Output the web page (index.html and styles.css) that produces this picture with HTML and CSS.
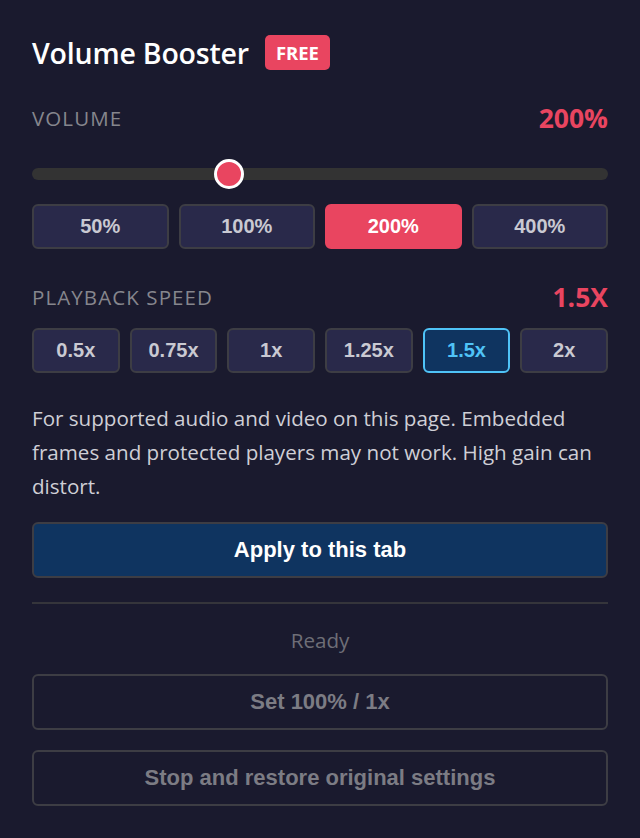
FILE: index.html
```html
<!DOCTYPE html>
<html lang="en">
<head>
<meta charset="utf-8">
<title>Volume Booster</title>
<link rel="stylesheet" href="styles.css">
</head>
<body>
<main class="popup">
  <header class="title-row">
    <h1 class="title">Volume Booster</h1>
    <span class="badge">FREE</span>
  </header>

  <section class="section">
    <div class="label-row">
      <span class="label">VOLUME</span>
      <span class="value">200%</span>
    </div>
    <div class="slider">
      <div class="track"></div>
      <div class="thumb" style="left: calc((100% - 30px) * 0.3333)"></div>
    </div>
    <div class="grid grid-4">
      <button class="chip">50%</button>
      <button class="chip">100%</button>
      <button class="chip chip-red">200%</button>
      <button class="chip">400%</button>
    </div>
  </section>

  <section class="section speed">
    <div class="label-row">
      <span class="label">PLAYBACK SPEED</span>
      <span class="value">1.5X</span>
    </div>
    <div class="grid grid-6">
      <button class="chip">0.5x</button>
      <button class="chip">0.75x</button>
      <button class="chip">1x</button>
      <button class="chip">1.25x</button>
      <button class="chip chip-blue">1.5x</button>
      <button class="chip">2x</button>
    </div>
  </section>

  <p class="note">For supported audio and video on this page. Embedded frames and protected players may not work. High gain can distort.</p>

  <button class="btn btn-primary">Apply to this tab</button>

  <hr class="divider">

  <div class="status">Ready</div>

  <button class="btn btn-ghost">Set 100% / 1x</button>
  <button class="btn btn-ghost">Stop and restore original settings</button>
</main>
</body>
</html>
```

FILE: styles.css
```css
* { box-sizing: border-box; }
html, body { margin: 0; padding: 0; }
body {
  background: #1a1a2e;
  color: #e6e6ea;
  font-family: "Open Sans", "Noto Sans", sans-serif;
  width: 640px;
  height: 838px;
  overflow: hidden;
}
.popup {
  padding: 35px 32px 0 32px;
  display: flex;
  flex-direction: column;
}
.title-row {
  display: flex;
  align-items: center;
  gap: 16px;
  height: 35px;
}
.title {
  margin: 0;
  font-size: 28.5px;
  font-weight: 600;
  color: #ffffff;
  letter-spacing: -0.2px;
}
.badge {
  background: #e94560;
  color: #fff;
  font-weight: 700;
  font-size: 18.5px;
  height: 35px;
  line-height: 35px;
  padding: 0 11px;
  border-radius: 5px;
}
.section { display: flex; flex-direction: column; }
.label-row {
  display: flex;
  justify-content: space-between;
  align-items: center;
  height: 28px;
  margin-top: 34px;
}
.label {
  font-size: 20.5px;
  font-weight: 400;
  color: #86868d;
  letter-spacing: 1.1px;
}
.value {
  font-size: 26.5px;
  font-weight: 700;
  color: #e94560;
}
.slider {
  position: relative;
  height: 30px;
  margin-top: 27px;
}
.track {
  position: absolute;
  left: 0; right: 0;
  top: 9px;
  height: 12px;
  border-radius: 6px;
  background: #333333;
}
.thumb {
  position: absolute;
  top: 0;
  width: 30px;
  height: 30px;
  border-radius: 50%;
  background: #e94560;
  border: 3px solid #ffffff;
}
.grid { display: grid; gap: 10px; }
.grid-4 { grid-template-columns: repeat(4, 1fr); margin-top: 15px; }
.grid-6 { grid-template-columns: repeat(6, 1fr); margin-top: 17px; }
.chip {
  height: 45px;
  background: #29294a;
  border: 2px solid #3d3d44;
  border-radius: 6px;
  color: #c9c9d2;
  font-family: "Liberation Sans", Arial, sans-serif;
  font-weight: 700;
  font-size: 20px;
  padding: 0;
}
.chip-red {
  background: #e94560;
  border-color: #e94560;
  color: #ffffff;
}
.chip-blue {
  background: #0f3460;
  border-color: #4fc3f7;
  color: #4fc3f7;
}
.note {
  margin: 28px 0 0 0;
  font-size: 20.6px;
  line-height: 34px;
  color: #cfcfd6;
}
.btn {
  width: 100%;
  height: 56px;
  border-radius: 6px;
  font-family: "Liberation Sans", Arial, sans-serif;
  font-weight: 700;
  font-size: 22px;
  padding: 0;
}
.btn-primary {
  margin-top: 19px;
  background: #0f3460;
  border: 2px solid #3d3d44;
  color: #ffffff;
}
.divider {
  margin: 24px 0 0 0;
  border: 0;
  height: 2px;
  background: #35353b;
}
.status {
  margin-top: 21px;
  text-align: center;
  font-size: 20.6px;
  line-height: 30px;
  color: #6e6e77;
}
.btn-ghost {
  margin-top: 19px;
  height: 56px;
  background: transparent;
  border: 2px solid #3d3d44;
  color: #7c7c84;
}
.btn-ghost + .btn-ghost { margin-top: 20px; }
```
